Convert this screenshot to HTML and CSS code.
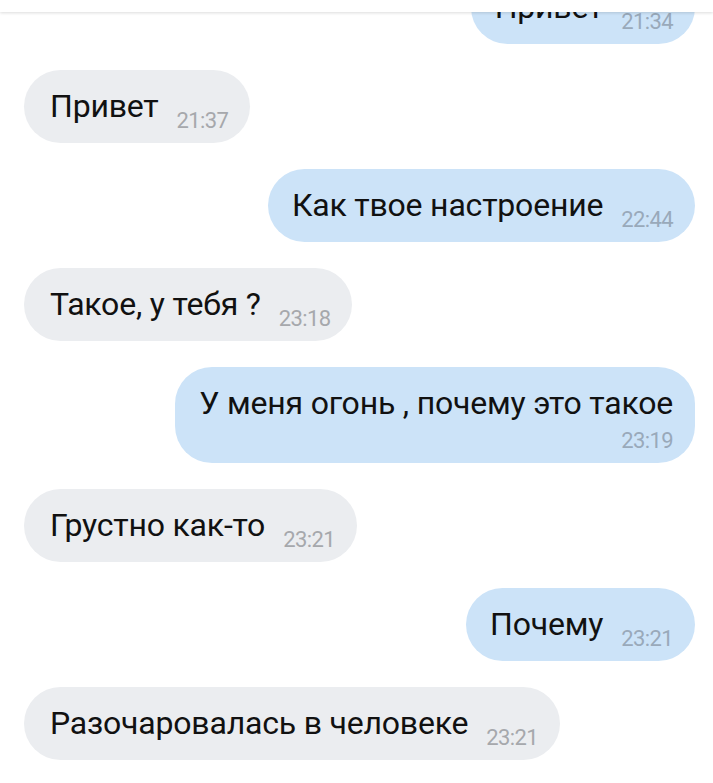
FILE: index.html
```html
<!DOCTYPE html>
<html lang="ru">
<head>
  <meta charset="UTF-8">
  <meta name="viewport" content="width=device-width, initial-scale=1.0">
  <title>Чат</title>
  <link rel="stylesheet" href="styles.css">
</head>
<body>
  <div class="screen">
    <div class="topbar"></div>

    <div class="messages">
      <div class="msg out first">
        <span class="text">Привет</span>
        <span class="time">21:34</span>
      </div>

      <div class="msg in">
        <span class="text">Привет</span>
        <span class="time">21:37</span>
      </div>

      <div class="msg out">
        <span class="text">Как твое настроение</span>
        <span class="time">22:44</span>
      </div>

      <div class="msg in">
        <span class="text">Такое, у тебя ?</span>
        <span class="time">23:18</span>
      </div>

      <div class="msg out wrap">
        <span class="text">У меня огонь , почему это такое</span>
        <span class="time">23:19</span>
      </div>

      <div class="msg in">
        <span class="text">Грустно как-то</span>
        <span class="time">23:21</span>
      </div>

      <div class="msg out">
        <span class="text">Почему</span>
        <span class="time">23:21</span>
      </div>

      <div class="msg in">
        <span class="text">Разочаровалась в человеке</span>
        <span class="time">23:21</span>
      </div>
    </div>
  </div>
</body>
</html>
```

FILE: styles.css
```css
body {
  margin: 0;
  padding: 0;
  background-color: #fff;
  font-family: Roboto, "Noto Sans", sans-serif;
  color: #111;
}

.screen {
  position: relative;
  height: 783px;
  overflow: hidden;
}

/* header strip that hides the top of the first bubble */
.topbar {
  position: absolute;
  top: 0;
  left: 0;
  right: 0;
  height: 12px;
  background-color: #fff;
  box-shadow: 0 1px 3px rgba(0, 0, 0, 0.14);
  z-index: 2;
}

.messages {
  display: flex;
  flex-direction: column;
  gap: 26px;
  padding: 0 18px 0 24px;
}

.msg {
  display: flex;
  align-items: flex-start;
  box-sizing: border-box;
  height: 73px;
  padding: 18px 22px 0 26px;
  border-radius: 37px;
}

.msg.first {
  margin-top: -29px;
}

.msg.in {
  align-self: flex-start;
  background-color: #ebedf0;
}

.msg.out {
  align-self: flex-end;
  background-color: #cce3f8;
  padding-left: 24px;
}

.text {
  font-size: 32px;
  line-height: 36px;
  letter-spacing: -0.2px;
  white-space: nowrap;
}

.time {
  margin-top: 22px;
  margin-left: 18px;
  font-size: 22px;
  line-height: 22px;
  letter-spacing: -0.6px;
  color: #a6a8ac;
}

.msg.out .time {
  color: #99a9ba;
}

/* long message: time drops under the text */
.msg.wrap {
  flex-direction: column;
  align-items: flex-end;
  height: 96px;
}

.msg.wrap .time {
  margin-top: 9px;
  margin-left: 0;
}
```
